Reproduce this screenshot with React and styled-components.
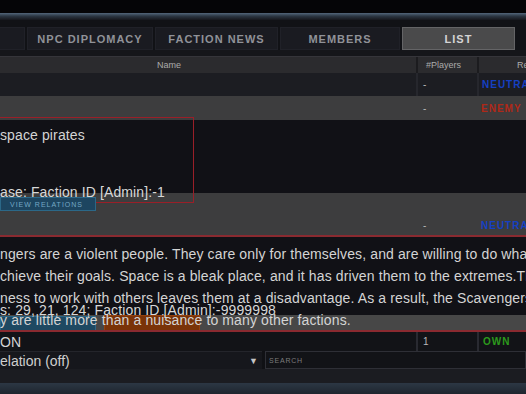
import styled, { createGlobalStyle } from 'styled-components'

const GlobalStyle = createGlobalStyle`
  html, body { margin: 0; padding: 0; background: #050507; }
  body { overflow: hidden; }
`

const Screen = styled.div`
  width: 526px;
  height: 394px;
  overflow: hidden;
  display: flex;
  flex-direction: column;
  background: #131418;
  font-family: 'Liberation Sans', Arial, sans-serif;
  color: #d2d2d2;
`

const Void = styled.div`
  flex: none;
  height: 13px;
  background: #050507;
`

const Rim = styled.div`
  flex: none;
  height: 7px;
  background: linear-gradient(#52667a, #2b3642 45%, #16171c);
`

const TabBar = styled.div`
  flex: none;
  height: 30px;
  box-sizing: border-box;
  padding-top: 7px;
  margin-left: -99px;
  display: flex;
  gap: 2px;
  background: #111216;
`

const Tab = styled.div`
  flex: none;
  width: ${p => p.$w}px;
  height: 23px;
  box-sizing: border-box;
  display: flex;
  align-items: center;
  justify-content: center;
  background: ${p => (p.$active ? '#4a4a4b' : '#1a1b21')};
  border: 1px solid ${p => (p.$active ? '#646466' : '#202128')};
  color: ${p => (p.$active ? '#d4d4d4' : '#909298')};
  font-size: 11px;
  font-weight: bold;
  letter-spacing: 1px;
  white-space: nowrap;
`

const Gap = styled.div`
  flex: none;
  height: 6px;
  background: #15161a;
  border-bottom: 1px solid #35353a;
`

const Row = styled.div`
  flex: none;
  display: grid;
  grid-template-columns: 416px 61px 1fr;
  height: ${p => p.$h}px;
  background: ${p => p.$bg};
  white-space: nowrap;
`

const Cell = styled.div`
  display: flex;
  align-items: ${p => (p.$bottom ? 'flex-end' : 'center')};
  padding-bottom: ${p => (p.$bottom ? 4 : 0)}px;
  padding-left: ${p => p.$pad || 0}px;
  box-sizing: border-box;
  overflow: hidden;
  border-left: ${p => (p.$line ? `2px solid ${p.$line}` : 'none')};
`

const HeadText = styled.span`
  font-size: 9px;
  color: #ababab;
`

const Dash = styled.span`
  font-size: 10px;
  color: #b8b8b8;
`

const relationColors = { neutral: '#1540c4', enemy: '#b02818', own: '#2c9a1c' }

const Relation = styled.span`
  font-size: 10px;
  font-weight: bold;
  letter-spacing: 1px;
  color: ${p => relationColors[p.$kind]};
`

const Panel = styled.div`
  flex: none;
  position: relative;
  height: ${p => p.$h}px;
  box-sizing: border-box;
  padding-top: ${p => p.$top}px;
  background: #111116;
  white-space: nowrap;
`

const Line = styled.div`
  position: relative;
  z-index: 2;
  font-size: 14px;
  line-height: ${p => p.$lh || 16}px;
  letter-spacing: 0.12px;
  color: #d4d4d4;
`

const InfoLine = styled.div`
  position: absolute;
  z-index: 3;
  left: 0;
  top: ${p => p.$top}px;
  font-size: 14px;
  line-height: 16px;
  letter-spacing: 0.12px;
  color: #d8d8d8;
`

const FrameBox = styled.div`
  position: absolute;
  z-index: 4;
  left: -4px;
  top: -3px;
  width: 198px;
  height: 86px;
  box-sizing: border-box;
  border: 1px solid #9a1f28;
`

const ViewButton = styled.div`
  position: absolute;
  z-index: 4;
  left: 0;
  top: 77px;
  width: 96px;
  height: 14px;
  box-sizing: border-box;
  padding-left: 9px;
  display: flex;
  align-items: center;
  background: #1d4560;
  border: 1px solid #2b6888;
  color: #74a8c6;
  font-size: 7px;
  letter-spacing: 1px;
`

const RedRule = styled.div`
  flex: none;
  height: 2px;
  background: #8a2a30;
`

const Band = styled.div`
  flex: none;
  height: 15px;
  display: flex;
  align-items: flex-start;
  gap: 8px;
  background: #474747;
`

const BandButton = styled.div`
  flex: none;
  width: 96px;
  height: ${p => (p.$tone === 'orange' ? 18 : 17)}px;
  margin-top: ${p => (p.$tone === 'orange' ? 0 : 1)}px;
  box-sizing: border-box;
  background: ${p => (p.$tone === 'orange' ? '#7a3308' : '#1e4962')};
  border: 1px solid ${p => (p.$tone === 'orange' ? '#93400e' : '#2b6686')};
`

const Controls = styled.div`
  flex: none;
  height: 18px;
  display: flex;
  gap: 3px;
  background: #101115;
`

const Select = styled.div`
  flex: none;
  width: 262px;
  box-sizing: border-box;
  padding-right: 4px;
  display: flex;
  align-items: center;
  justify-content: space-between;
  background: #16171c;
  border-top: 1px solid #24252b;
  font-size: 14px;
  color: #cfcfcf;
`

const Arrow = styled.span`
  font-size: 9px;
  color: #c4c4c4;
`

const Search = styled.div`
  flex: 1;
  box-sizing: border-box;
  padding-left: 3px;
  display: flex;
  align-items: center;
  background: #121317;
  border: 1px solid #2e2f36;
  font-size: 7px;
  letter-spacing: 0.8px;
  color: #7c7c7c;
`

const Footer = styled.div`
  flex: none;
  height: 14px;
  background: #1b1c21;
`

const Base = styled.div`
  flex: none;
  height: 11px;
  background: linear-gradient(#2c3744, #1e252e);
`

const tabs = [
  { label: '', w: 124 },
  { label: 'NPC DIPLOMACY', w: 126 },
  { label: 'FACTION NEWS', w: 123 },
  { label: 'MEMBERS', w: 120 },
  { label: 'LIST', w: 113, active: true },
]

const scavengerLines = [
  'ngers are a violent people. They care only for themselves, and are willing to do wha',
  'chieve their goals. Space is a bleak place, and it has driven them to the extremes.Th',
  'ness to work with others leaves them at a disadvantage. As a result, the Scavengers',
  'y are little more than a nuisance to many other factions.',
]

export default function App() {
  return (
    <>
      <GlobalStyle />
      <Screen>
        <Void />
        <Rim />
        <TabBar>
          {tabs.map((t, i) => (
            <Tab key={i} $w={t.w} $active={t.active}>{t.label}</Tab>
          ))}
        </TabBar>
        <Gap />

        <Row $h={16} $bg="#2b2b2e">
          <Cell $pad={157}><HeadText>Name</HeadText></Cell>
          <Cell $line="#1c1c1f" $pad={8}><HeadText>#Players</HeadText></Cell>
          <Cell $line="#1c1c1f" $pad={38}><HeadText>Relation</HeadText></Cell>
        </Row>

        <Row $h={23} $bg="#1c1d22">
          <Cell />
          <Cell $line="#26272d" $pad={5}><Dash>-</Dash></Cell>
          <Cell $line="#26272d" $pad={3}><Relation $kind="neutral">NEUTRAL</Relation></Cell>
        </Row>

        <Row $h={24} $bg="#3d3d3e">
          <Cell />
          <Cell $pad={7}><Dash>-</Dash></Cell>
          <Cell $pad={4}><Relation $kind="enemy">ENEMY</Relation></Cell>
        </Row>

        <Panel $h={73} $top={7}>
          <Line>space pirates</Line>
          <InfoLine $top={64}>ase: Faction ID [Admin]:-1</InfoLine>
          <FrameBox />
          <ViewButton>VIEW RELATIONS</ViewButton>
        </Panel>

        <Row $h={42} $bg="#3d3d3e">
          <Cell />
          <Cell $bottom $pad={7}><Dash>-</Dash></Cell>
          <Cell $bottom $pad={4}><Relation $kind="neutral">NEUTRAL</Relation></Cell>
        </Row>
        <RedRule />

        <Panel $h={78} $top={6}>
          {scavengerLines.map((l, i) => (
            <Line key={i} $lh={22}>{l}</Line>
          ))}
          <InfoLine $top={65}>s: 29, 21, 124; Faction ID [Admin]:-9999998</InfoLine>
        </Panel>
        <Band>
          <BandButton $tone="blue" />
          <BandButton $tone="orange" />
        </Band>
        <RedRule />

        <Row $h={19} $bg="#121317">
          <Cell><Line>ON</Line></Cell>
          <Cell $line="#292a31" $pad={5}><Dash>1</Dash></Cell>
          <Cell $line="#292a31" $pad={4}><Relation $kind="own">OWN</Relation></Cell>
        </Row>

        <Controls>
          <Select>
            <span>elation (off)</span>
            <Arrow>▼</Arrow>
          </Select>
          <Search>SEARCH</Search>
        </Controls>
        <Footer />
        <Base />
      </Screen>
    </>
  )
}
